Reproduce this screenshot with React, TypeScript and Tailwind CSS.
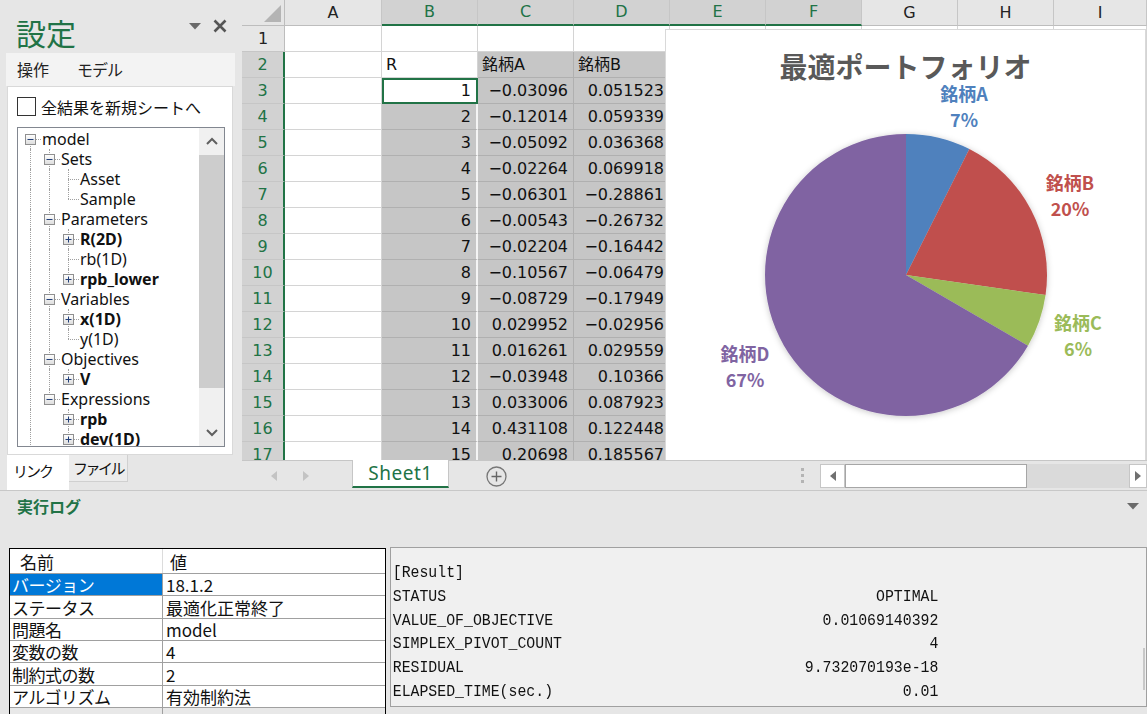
import React from 'react';

const cVals = ['−0.03096','−0.12014','−0.05092','−0.02264','−0.06301','−0.00543','−0.02204','−0.10567','−0.08729','0.029952','0.016261','−0.03948','0.033006','0.431108','0.20698'];
const dVals = ['0.051523','0.059339','0.036368','0.069918','−0.28861','−0.26732','−0.16442','−0.06479','−0.17949','−0.02956','0.029559','0.10366','0.087923','0.122448','0.185567'];
const COLS = ['A','B','C','D','E','F','G','H','I'];
const COLW = ['w-[97px]','w-[96px]','w-[96px]','w-[96px]','w-[96px]','w-[96px]','w-[96px]','w-[96px]','flex-1'];

type TNode = { label: string; level: number; box?: 'minus' | 'plus'; bold?: boolean; first?: boolean; last?: boolean; cont: number[] };
const TREE: TNode[] = [
  { label: 'model', level: 0, box: 'minus', first: true, cont: [] },
  { label: 'Sets', level: 1, box: 'minus', first: true, cont: [0] },
  { label: 'Asset', level: 2, first: true, cont: [0, 1] },
  { label: 'Sample', level: 2, last: true, cont: [0, 1] },
  { label: 'Parameters', level: 1, box: 'minus', cont: [0] },
  { label: 'R(2D)', level: 2, box: 'plus', bold: true, first: true, cont: [0, 1] },
  { label: 'rb(1D)', level: 2, cont: [0, 1] },
  { label: 'rpb_lower', level: 2, box: 'plus', bold: true, last: true, cont: [0, 1] },
  { label: 'Variables', level: 1, box: 'minus', cont: [0] },
  { label: 'x(1D)', level: 2, box: 'plus', bold: true, first: true, cont: [0, 1] },
  { label: 'y(1D)', level: 2, last: true, cont: [0, 1] },
  { label: 'Objectives', level: 1, box: 'minus', cont: [0] },
  { label: 'V', level: 2, box: 'plus', bold: true, first: true, last: true, cont: [0, 1] },
  { label: 'Expressions', level: 1, box: 'minus', last: true, cont: [0] },
  { label: 'rpb', level: 2, box: 'plus', bold: true, first: true, cont: [0] },
  { label: 'dev(1D)', level: 2, box: 'plus', bold: true, cont: [0] },
];
const LVL_LEFT = ['left-[12px]', 'left-[31px]', 'left-[50px]'];
const LVL_BOX = ['left-[7px]', 'left-[26px]', 'left-[45px]'];
const LVL_PAD = ['pl-[24px]', 'pl-[43px]', 'pl-[62px]'];

function TreeBox({ kind }: { kind: 'minus' | 'plus' }) {
  return (
    <svg width="11" height="11" viewBox="0 0 11 11">
      <defs>
        <linearGradient id="tbg" x1="0" y1="0" x2="0" y2="1">
          <stop offset="0" stopColor="#ffffff" />
          <stop offset="1" stopColor="#dcdcdc" />
        </linearGradient>
      </defs>
      <rect x="0.5" y="0.5" width="10" height="10" fill="url(#tbg)" stroke="#8f8f8f" />
      <line x1="2.5" y1="5.5" x2="8.5" y2="5.5" stroke="#23407a" strokeWidth="1" />
      {kind === 'plus' && <line x1="5.5" y1="2.5" x2="5.5" y2="8.5" stroke="#23407a" strokeWidth="1" />}
    </svg>
  );
}

function TreeRow({ n }: { n: TNode }) {
  return (
    <div className="relative h-[20px]">
      {n.cont.map((a) => (
        <span key={a} className={`absolute top-0 bottom-0 border-l border-dotted border-[#a0a0a0] ${LVL_LEFT[a]}`} />
      ))}
      {!(n.level === 0 && n.first) && (
        <span className={`absolute top-0 h-[10px] border-l border-dotted border-[#a0a0a0] ${LVL_LEFT[n.level]}`} />
      )}
      {!n.last && (
        <span className={`absolute top-[10px] bottom-0 border-l border-dotted border-[#a0a0a0] ${LVL_LEFT[n.level]}`} />
      )}
      <span className={`absolute top-[10px] w-[11px] border-t border-dotted border-[#a0a0a0] ${LVL_LEFT[n.level]}`} />
      {n.box && (
        <span className={`absolute top-[5px] flex ${LVL_BOX[n.level]}`}>
          <TreeBox kind={n.box} />
        </span>
      )}
      <div className={`relative h-[20px] text-[16px] leading-[20px] whitespace-nowrap text-[#111] ${LVL_PAD[n.level]} ${n.bold ? 'font-bold' : ''}`}>
        {n.label}
      </div>
    </div>
  );
}

function LeftPanel() {
  return (
    <div className="w-[242px] h-[490px] flex flex-col shrink-0">
      <div className="h-[53px] flex items-start justify-between pl-[16px] pr-[15px]">
        <div className="mt-[15px] text-[30px] leading-[34px] text-[#217346] font-['Noto_Sans_CJK_JP',sans-serif]">設定</div>
        <div className="flex items-start gap-[12px]">
          <svg width="12" height="7" viewBox="0 0 12 7" className="mt-[23px]">
            <polygon points="0,0 12,0 6,6.5" fill="#6a6a6a" />
          </svg>
          <svg width="14" height="14" viewBox="0 0 14 14" className="mt-[19px]">
            <path d="M1.5 1.5 L12.5 12.5 M12.5 1.5 L1.5 12.5" stroke="#555" strokeWidth="2.6" />
          </svg>
        </div>
      </div>
      <div className="pl-[6px] pr-[7px]">
        <div className="h-[33px] bg-[#f3f3f3] flex items-center text-[16px] text-[#222]">
          <span className="pl-[11px] w-[71px]">操作</span>
          <span className="tracking-[-1px]">モデル</span>
        </div>
        <div className="ml-[1px] w-[226px] h-[369px] bg-white border border-[#d9d9d9] px-[9px]">
          <div className="mt-[9px] h-[21px] flex items-center">
            <div className="w-[19px] h-[19px] border border-[#333] bg-white" />
            <span className="ml-[5px] text-[16px] text-[#111] font-['Noto_Sans_CJK_JP',sans-serif]">全結果を新規シートへ</span>
          </div>
          <div className="mt-[10px] w-[208px] h-[320px] border border-[#828790] flex">
            <div className="flex-1 pt-[1px] overflow-hidden">
              {TREE.map((n, i) => (
                <TreeRow key={i} n={n} />
              ))}
            </div>
            <div className="w-[25px] bg-[#f0f0f0] flex flex-col">
              <div className="h-[26px] flex items-center justify-center">
                <svg width="12" height="8" viewBox="0 0 12 8"><polyline points="1,7 6,2 11,7" fill="none" stroke="#606060" strokeWidth="2" /></svg>
              </div>
              <div className="mt-[1px] h-[233px] bg-[#cdcdcd]" />
              <div className="flex-1" />
              <div className="h-[26px] flex items-center justify-center">
                <svg width="12" height="8" viewBox="0 0 12 8"><polyline points="1,1 6,6 11,1" fill="none" stroke="#606060" strokeWidth="2" /></svg>
              </div>
            </div>
          </div>
        </div>
      </div>
      <div className="h-[35px] pl-[7px] flex items-start text-[15px] text-[#111] whitespace-nowrap">
        <div className="w-[62px] h-[35px] bg-white flex items-center pl-[6px] pb-[2px] tracking-[-2px]">リンク</div>
        <div className="w-[59px] h-[27px] bg-[#ececec] border-r border-b border-[#d0d0d0] flex items-center pl-[4px] tracking-[-2.5px] overflow-hidden">ファイル</div>
      </div>
    </div>
  );
}

function Cell({ r, c }: { r: number; c: number }) {
  let content = '';
  let left = false;
  if (r === 2 && c === 1) { content = 'R'; left = true; }
  if (r === 2 && c === 2) { content = '銘柄A'; left = true; }
  if (r === 2 && c === 3) { content = '銘柄B'; left = true; }
  if (r >= 3 && c === 1) content = String(r - 2);
  if (r >= 3 && c === 2) content = cVals[r - 3];
  if (r >= 3 && c === 3) content = dVals[r - 3];
  const active = r === 3 && c === 1;
  const gray = (r >= 2 && c >= 2 && c <= 5) || (r >= 4 && c === 1);
  let cls = 'bg-white border-b border-r border-[#d4d4d4]';
  if (active) cls = 'bg-white border-2 border-[#217346]';
  else if (gray && c === 1) cls = 'bg-[#c6c6c6] border-b border-b-[#b0b0b0] border-r-2 border-r-[#f4f4f4]';
  else if (gray) cls = 'bg-[#c6c6c6] border-b border-r border-[#b0b0b0]';
  return (
    <div className={`h-[26px] shrink-0 flex items-center whitespace-nowrap overflow-hidden text-[16px] text-[#111] ${COLW[c]} ${cls} ${left ? 'justify-start pl-[4px]' : 'justify-end pr-[5px]'}`}>
      {content}
    </div>
  );
}

function pieSlice(cx: number, cy: number, r: number, a0: number, a1: number) {
  const rad = (d: number) => (d * Math.PI) / 180;
  const x0 = cx + r * Math.sin(rad(a0));
  const y0 = cy - r * Math.cos(rad(a0));
  const x1 = cx + r * Math.sin(rad(a1));
  const y1 = cy - r * Math.cos(rad(a1));
  const large = a1 - a0 > 180 ? 1 : 0;
  return `M${cx},${cy} L${x0},${y0} A${r},${r} 0 ${large} 1 ${x1},${y1} Z`;
}

function ChartLabel({ pos, color, name, pct }: { pos: string; color: string; name: string; pct: string }) {
  return (
    <div className={`absolute -translate-x-1/2 flex flex-col items-center text-[18px] font-bold leading-none whitespace-nowrap gap-[8px] ${pos} ${color}`}>
      <span>{name}</span>
      <span>{pct}</span>
    </div>
  );
}

function Chart() {
  const cx = 240, cy = 245, r = 141;
  const slices = [
    { a0: 0, a1: 26.7, color: '#4f81bd' },
    { a0: 26.7, a1: 98.2, color: '#c0504d' },
    { a0: 98.2, a1: 120.1, color: '#9bbb59' },
    { a0: 120.1, a1: 360, color: '#8064a2' },
  ];
  return (
    <div className="absolute left-[423px] top-[29px] w-[481px] h-[440px] bg-white border border-[#d9d9d9] font-['Noto_Sans_CJK_JP',sans-serif]">
      <svg className="absolute left-0 top-0" width="479" height="438" viewBox="0 0 479 438">
        <defs>
          <filter id="pshadow" x="-20%" y="-20%" width="140%" height="140%">
            <feDropShadow dx="0" dy="1" stdDeviation="3" floodColor="#000" floodOpacity="0.22" />
          </filter>
        </defs>
        <g filter="url(#pshadow)">
          {slices.map((s, i) => (
            <path key={i} d={pieSlice(cx, cy, r, s.a0, s.a1)} fill={s.color} />
          ))}
        </g>
      </svg>
      <div className="relative mt-[18px] text-center text-[28px] leading-[36px] font-bold text-[#595959]">最適ポートフォリオ</div>
      <ChartLabel pos="left-[298px] top-[54px]" color="text-[#4f81bd]" name="銘柄A" pct="7%" />
      <ChartLabel pos="left-[404px] top-[143px]" color="text-[#c0504d]" name="銘柄B" pct="20%" />
      <ChartLabel pos="left-[412px] top-[283px]" color="text-[#9bbb59]" name="銘柄C" pct="6%" />
      <ChartLabel pos="left-[79px] top-[314px]" color="text-[#8064a2]" name="銘柄D" pct="67%" />
    </div>
  );
}

function Sheet() {
  const rows = Array.from({ length: 17 }, (_, i) => i + 1);
  return (
    <div className="relative h-[460px] overflow-hidden bg-white font-['DejaVu_Sans','Noto_Sans_CJK_JP',sans-serif]">
      <div className="flex h-[26px]">
        <div className="relative w-[43px] h-[26px] shrink-0 bg-[#e6e6e6] border-r border-b border-[#bdbdbd]">
          <svg className="absolute right-[3px] bottom-[3px]" width="17" height="17" viewBox="0 0 17 17">
            <polygon points="17,0 17,17 0,17" fill="#b4b4b4" />
          </svg>
        </div>
        {COLS.map((c, i) => {
          const sel = i >= 1 && i <= 5;
          return (
            <div
              key={c}
              className={`h-[26px] shrink-0 flex items-center justify-center text-[16px] border-r border-r-[#c6c6c6] ${COLW[i]} ${sel ? 'bg-[#d2d2d2] text-[#217346] border-b-2 border-b-[#217346]' : 'bg-[#e6e6e6] text-[#222] border-b border-b-[#bdbdbd]'}`}
            >
              {c}
            </div>
          );
        })}
      </div>
      {rows.map((r) => (
        <div key={r} className="flex h-[26px]">
          <div
            className={`w-[43px] h-[26px] shrink-0 flex items-center justify-center text-[16px] border-b border-b-[#c6c6c6] ${r === 1 ? 'bg-[#e6e6e6] text-[#222] border-r border-r-[#bdbdbd]' : 'bg-[#d2d2d2] text-[#217346] border-r-2 border-r-[#217346]'}`}
          >
            {r}
          </div>
          {COLS.map((_, c) => (
            <Cell key={c} r={r} c={c} />
          ))}
        </div>
      ))}
      <Chart />
    </div>
  );
}

function TabBar() {
  return (
    <div className="h-[30px] bg-[#e6e6e6] border-t border-[#c6c6c6] flex items-center font-['Noto_Sans','Noto_Sans_CJK_JP',sans-serif]">
      <div className="w-[110px] h-[29px] flex items-center">
        <svg className="ml-[29px]" width="6" height="10" viewBox="0 0 6 10"><polygon points="6,0 6,10 0,5" fill="#c3c3c3" /></svg>
        <svg className="ml-[26px]" width="6" height="10" viewBox="0 0 6 10"><polygon points="0,0 0,10 6,5" fill="#c3c3c3" /></svg>
      </div>
      <div className="self-start -mt-px w-[97px] h-[28px] bg-white border-x border-[#c6c6c6] border-b-2 border-b-[#217346] flex items-center justify-center text-[19px] tracking-[0.5px] text-[#217346]">
        Sheet1
      </div>
      <svg className="ml-[37px] mt-[2px]" width="21" height="21" viewBox="0 0 21 21">
        <circle cx="10.5" cy="10.5" r="9.5" fill="none" stroke="#777" strokeWidth="1.3" />
        <path d="M10.5 5.5 V15.5 M5.5 10.5 H15.5" stroke="#666" strokeWidth="1.4" />
      </svg>
      <div className="ml-[294px] w-[3px] flex flex-col gap-[3px]">
        <div className="h-[3px] bg-[#b4b4b4]" />
        <div className="h-[3px] bg-[#b4b4b4]" />
        <div className="h-[3px] bg-[#b4b4b4]" />
      </div>
      <div className="ml-[16px] flex-1 h-[24px] flex">
        <div className="w-[25px] h-[24px] bg-white border border-[#c6c6c6] flex items-center justify-center">
          <svg width="6" height="10" viewBox="0 0 6 10"><polygon points="6,0 6,10 0,5" fill="#707070" /></svg>
        </div>
        <div className="w-[182px] h-[24px] bg-white border border-[#a6a6a6]" />
        <div className="flex-1 h-[24px] bg-[#dadada]" />
        <div className="w-[18px] h-[24px] bg-white border border-[#c6c6c6] flex items-center justify-center">
          <svg width="6" height="10" viewBox="0 0 6 10"><polygon points="0,0 0,10 6,5" fill="#707070" /></svg>
        </div>
      </div>
    </div>
  );
}

const TROWS: { n: string; v: string; h: string; sel?: boolean }[] = [
  { n: 'バージョン', v: '18.1.2', h: 'h-[22px]', sel: true },
  { n: 'ステータス', v: '最適化正常終了', h: 'h-[23px]' },
  { n: '問題名', v: 'model', h: 'h-[22px]' },
  { n: '変数の数', v: '4', h: 'h-[22px]' },
  { n: '制約式の数', v: '2', h: 'h-[23px]' },
  { n: 'アルゴリズム', v: '有効制約法', h: 'h-[22px]' },
];

const LOG: [string, string][] = [
  ['[Result]', ''],
  ['STATUS', 'OPTIMAL'],
  ['VALUE_OF_OBJECTIVE', '0.01069140392'],
  ['SIMPLEX_PIVOT_COUNT', '4'],
  ['RESIDUAL', '9.732070193e-18'],
  ['ELAPSED_TIME(sec.)', '0.01'],
];

function LogPanel() {
  return (
    <div className="h-[224px] border-t border-[#c8c8c8] flex flex-col font-['Noto_Sans','Noto_Sans_CJK_JP',sans-serif]">
      <div className="h-[30px] flex items-center justify-between pl-[17px] pr-[8px]">
        <span className="text-[16px] font-bold text-[#217346] font-['Noto_Sans_CJK_JP',sans-serif]">実行ログ</span>
        <svg width="12" height="7" viewBox="0 0 12 7"><polygon points="0,0 12,0 6,6.5" fill="#6a6a6a" /></svg>
      </div>
      <div className="mt-[27px] flex items-start pl-[9px] gap-[4px]">
        <div className="w-[377px] h-[166px] border-l border-t border-r border-black bg-white overflow-hidden text-[17px] leading-none text-[#111] font-['Noto_Sans_CJK_JP',sans-serif]">
          <div className="h-[25px] flex border-b border-[#a0a0a0]">
            <div className="w-[153px] border-r border-[#dcdcdc] pl-[10px] flex items-center">名前</div>
            <div className="flex-1 pl-[7px] flex items-center">値</div>
          </div>
          {TROWS.map((t) => (
            <div key={t.n} className={`${t.h} flex border-b border-[#a0a0a0]`}>
              <div className={`w-[153px] border-r border-[#a0a0a0] pl-[2px] flex items-center whitespace-nowrap tracking-[-0.5px] ${t.sel ? 'bg-[#0078d7] text-white' : ''}`}>{t.n}</div>
              <div className="flex-1 pl-[3px] flex items-center whitespace-nowrap">{t.v}</div>
            </div>
          ))}
          <div className="h-[20px] flex bg-[#e8e8e8]">
            <div className="w-[153px] border-r border-[#a0a0a0]" />
          </div>
        </div>
        <div className="relative flex-1 h-[160px] -mt-px bg-[#f0f0f0] border border-[#a0a0a0] overflow-hidden">
          <div className="w-[627px] pl-[2px] pt-[13px] origin-left scale-x-[0.873] font-['Liberation_Mono',monospace] text-[17px] text-[#111]">
            {LOG.map(([k, v]) => (
              <div key={k} className="h-[23.8px] leading-[23.8px] flex justify-between whitespace-nowrap">
                <span>{k}</span>
                <span>{v}</span>
              </div>
            ))}
          </div>
          <div className="absolute right-[1px] top-[100px] h-[42px] w-[2px] bg-[#c8c8c8]" />
        </div>
      </div>
    </div>
  );
}

export default function App() {
  return (
    <div className="w-[1147px] h-[714px] overflow-hidden bg-[#e6e6e6] flex flex-col font-['Noto_Sans','Noto_Sans_CJK_JP',sans-serif] text-[#222]">
      <div className="flex h-[490px] shrink-0">
        <LeftPanel />
        <div className="w-[905px] flex flex-col">
          <Sheet />
          <TabBar />
        </div>
      </div>
      <LogPanel />
    </div>
  );
}
